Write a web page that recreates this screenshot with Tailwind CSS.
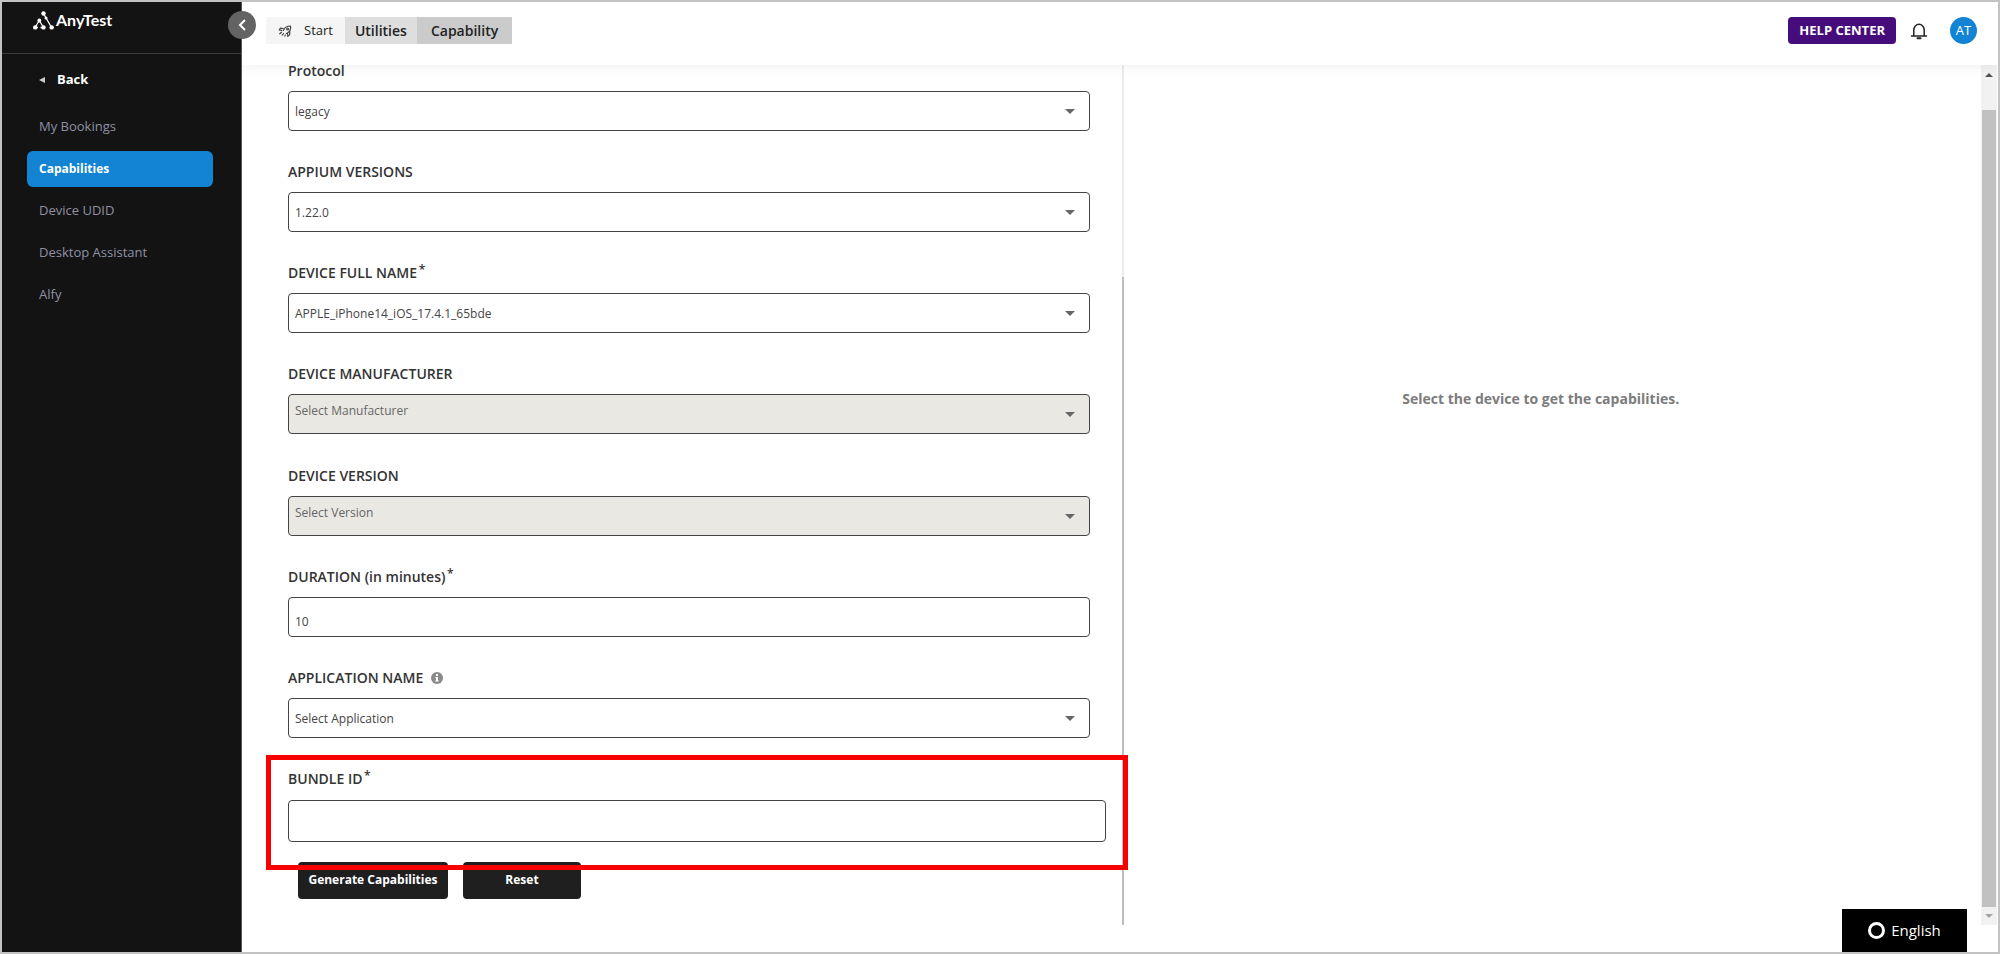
<!DOCTYPE html>
<html lang="en">
<head>
    <meta charset="UTF-8">
    <title>AnyTest - Capability</title>
    <script src="https://cdn.jsdelivr.net/npm/@tailwindcss/browser@4"></script>
</head>
<body class="font-['Open_Sans',sans-serif] text-[#333]">
<div class="relative flex h-screen border-2 border-[#c3c3c3] bg-white overflow-hidden">

    <!-- Sidebar -->
    <aside class="relative z-20 w-60 shrink-0 bg-[#131313] border-r border-[#555]">
        <div class="h-[52px] border-b border-[#3a3a3a] pl-[31px] pt-2">
            <a href="#" class="flex items-start gap-0.5 text-white font-['Lato',sans-serif] font-bold text-[16px] leading-5">
                <svg class="w-[21px] h-5" viewBox="0 0 21 20" fill="none" stroke="#fff" stroke-width="1.3">
                    <path d="M10.500 3.500L18.500 17.500M6.300 10.500L2 17.500H5M6.300 10.500l4.200 7h-3"/>
                    <g fill="#fff" stroke="none">
                        <circle cx="10.500" cy="3.500" r="2.200"/>
                        <circle cx="13" cy="8" r="1.500"/>
                        <circle cx="6.300" cy="10.500" r="1.900"/>
                        <circle cx="2.200" cy="17.400" r="2.200"/>
                        <circle cx="10.500" cy="17.400" r="2.200"/>
                        <circle cx="18.700" cy="17.400" r="2.200"/>
                    </g>
                </svg>
                AnyTest
            </a>
        </div>
        <button type="button" aria-label="Collapse menu" class="absolute top-[9px] -right-[15px] size-7 rounded-full bg-[#636363] flex items-center justify-center">
            <svg class="w-2 h-3" viewBox="0 0 8 12" fill="none" stroke="#fff" stroke-width="2"><path d="M7 1L2 6l5 5"/></svg>
        </button>
        <a href="#" class="flex items-center gap-3 mt-4 pl-[37px] h-5 text-white font-bold text-[13px]">
            <svg class="w-[6px] h-[6px]" viewBox="0 0 6 6" fill="#ccc"><path d="M6 0v6L0 3z"/></svg>
            Back
        </a>
        <nav class="mt-[19px] ml-[25px] mr-7 flex flex-col gap-1.5 text-[13px] font-medium text-[#8f91a3]">
            <a href="#" class="flex items-center h-9 pl-3">My Bookings</a>
            <a href="#" class="flex items-center h-9 pl-3 rounded-md bg-[#1284d3] text-white text-[12px] font-bold">Capabilities</a>
            <a href="#" class="flex items-center h-9 pl-3">Device UDID</a>
            <a href="#" class="flex items-center h-9 pl-3">Desktop Assistant</a>
            <a href="#" class="flex items-center h-9 pl-3">Alfy</a>
        </nav>
    </aside>

    <div class="flex-1 min-w-0 flex flex-col">
        <!-- Top bar -->
        <header class="relative z-10 h-[63px] shrink-0 bg-white shadow-[0_2px_12px_rgba(0,0,0,0.06)] pl-6 pr-[21px] pt-[15px] flex items-start justify-between">
            <nav class="flex h-[27px] text-[14px] text-[#222]">
                <a href="#" class="flex items-center gap-3 pl-3 pr-3 bg-[#f5f5f5] text-[13px]">
                    <svg class="w-3.5 h-3.5" viewBox="0 0 14 14" fill="none" stroke="#444" stroke-width="1.2" stroke-linecap="round" stroke-linejoin="round">
                        <path d="M5.500 6.500C6.500 3.500 9 2 12.500 2c.6 3.500-.8 6-4 7.500M5.200 4.500L2.500 4.200 1.200 6l2.600.4M9.500 9.200l.3 3.200 1.800-1.500.2-3.200M3.500 8.200L1.800 9.800M5.500 9.500l-1.200 1.700M7.300 10.800l-.4 1.400"/>
                        <circle cx="9.600" cy="4.900" r="0.900"/>
                    </svg>
                    Start
                </a>
                <a href="#" class="flex items-center px-2.5 bg-[#dedede] font-semibold">Utilities</a>
                <a href="#" class="flex items-center px-3.5 bg-[#cbcbcb] font-semibold">Capability</a>
            </nav>
            <div class="flex items-center h-[27px]">
                <a href="#" class="flex items-center h-[27px] px-[11px] rounded bg-[#470c7c] text-white text-[13px] font-bold">HELP CENTER</a>
                <button type="button" aria-label="Notifications" class="ml-3.5">
                    <svg class="w-[18px] h-[18px]" viewBox="0 0 18 18" fill="none" stroke="#222" stroke-width="1.5" stroke-linecap="round" stroke-linejoin="round">
                        <path d="M1.500 14h15M3.800 14V8a5.200 5.800 0 0 1 10.400 0v6"/>
                        <path d="M7.500 16.200h3" stroke-width="2"/>
                    </svg>
                </button>
                <button type="button" class="ml-[22px] size-[27px] rounded-full bg-[#1284d3] text-white text-[13px] font-medium">AT</button>
            </div>
        </header>

        <!-- Content -->
        <main class="flex-1 min-h-0 flex mb-[27px] mr-px">
            <div class="flex-1 grid grid-cols-[883fr_857fr]">
                <section class="relative flex flex-col border-r-2 border-[#ececec] pl-[46px] -mt-1">
                    <form class="flex-1 flex flex-col">
                        <div class="flex-1 flex flex-col justify-between text-[14px] leading-5 pr-4">
                            <div class="mr-4">
                                <label for="protocol" class="block font-semibold">Protocol</label>
                                <div class="relative mt-2.5">
                                    <select id="protocol" class="appearance-none block w-full h-10 px-1.5 pt-0.5 rounded border border-[#444] bg-white text-[12px] text-[#444]">
                                        <option>legacy</option>
                                    </select>
                                    <svg class="absolute right-[15px] top-[18px] w-2.5 h-[5px] pointer-events-none" viewBox="0 0 10 5" fill="#666"><path d="M0 0h10L5 5z"/></svg>
                                </div>
                            </div>
                            <div class="mr-4">
                                <label for="appium" class="block font-semibold">APPIUM VERSIONS</label>
                                <div class="relative mt-2.5">
                                    <select id="appium" class="appearance-none block w-full h-10 px-1.5 pt-0.5 rounded border border-[#444] bg-white text-[12px] text-[#444]">
                                        <option>1.22.0</option>
                                    </select>
                                    <svg class="absolute right-[15px] top-[18px] w-2.5 h-[5px] pointer-events-none" viewBox="0 0 10 5" fill="#666"><path d="M0 0h10L5 5z"/></svg>
                                </div>
                            </div>
                            <div class="mr-4">
                                <label for="device" class="block font-semibold">DEVICE FULL NAME <sup class="-ml-0.5 -top-1 text-[12px]">*</sup></label>
                                <div class="relative mt-2.5">
                                    <select id="device" class="appearance-none block w-full h-10 px-1.5 pt-0.5 rounded border border-[#444] bg-white text-[12px] text-[#444]">
                                        <option>APPLE_iPhone14_iOS_17.4.1_65bde</option>
                                    </select>
                                    <svg class="absolute right-[15px] top-[18px] w-2.5 h-[5px] pointer-events-none" viewBox="0 0 10 5" fill="#666"><path d="M0 0h10L5 5z"/></svg>
                                </div>
                            </div>
                            <div class="mr-4">
                                <label for="manufacturer" class="block font-semibold">DEVICE MANUFACTURER</label>
                                <div class="relative mt-2.5">
                                    <select id="manufacturer" disabled class="appearance-none block w-full h-10 px-1.5 pb-1.5 rounded border border-[#444] bg-[#e9e8e3] text-[12px] text-[#666] opacity-100">
                                        <option>Select Manufacturer</option>
                                    </select>
                                    <svg class="absolute right-[15px] top-[18px] w-2.5 h-[5px] pointer-events-none" viewBox="0 0 10 5" fill="#666"><path d="M0 0h10L5 5z"/></svg>
                                </div>
                            </div>
                            <div class="mr-4">
                                <label for="version" class="block font-semibold">DEVICE VERSION</label>
                                <div class="relative mt-2.5">
                                    <select id="version" disabled class="appearance-none block w-full h-10 px-1.5 pb-1.5 rounded border border-[#444] bg-[#e9e8e3] text-[12px] text-[#666] opacity-100">
                                        <option>Select Version</option>
                                    </select>
                                    <svg class="absolute right-[15px] top-[18px] w-2.5 h-[5px] pointer-events-none" viewBox="0 0 10 5" fill="#666"><path d="M0 0h10L5 5z"/></svg>
                                </div>
                            </div>
                            <div class="mr-4">
                                <label for="duration" class="block font-semibold">DURATION (in minutes) <sup class="-ml-0.5 -top-1 text-[12px]">*</sup></label>
                                <input id="duration" type="text" value="10" class="block w-full h-10 mt-2.5 px-1.5 pt-2.5 rounded border border-[#444] bg-white text-[12px] text-[#444]">
                            </div>
                            <div class="mr-4">
                                <div class="flex items-center gap-2">
                                    <label for="application" class="font-semibold">APPLICATION NAME</label>
                                    <svg class="w-3 h-3" viewBox="0 0 12 12">
                                        <circle cx="6" cy="6" r="6" fill="#8a8a8a"/>
                                        <path d="M5 2h2v2H5zM4.200 5H7v3.500h.8V9.600H4.200V8.500H5V6h-.8z" fill="#fff"/>
                                    </svg>
                                </div>
                                <div class="relative mt-2.5">
                                    <select id="application" class="appearance-none block w-full h-10 px-1.5 pt-0.5 rounded border border-[#444] bg-white text-[12px] text-[#444]">
                                        <option>Select Application</option>
                                    </select>
                                    <svg class="absolute right-[15px] top-[18px] w-2.5 h-[5px] pointer-events-none" viewBox="0 0 10 5" fill="#666"><path d="M0 0h10L5 5z"/></svg>
                                </div>
                            </div>
                            <div class="relative">
                                <label for="bundle" class="block font-semibold">BUNDLE ID <sup class="-ml-0.5 -top-1 text-[12px]">*</sup></label>
                                <input id="bundle" type="text" class="block w-full h-[42px] mt-[11px] px-1.5 rounded border border-[#444] bg-white text-[12px] text-[#444]">
                                <!-- Highlight around the bundle field -->
                                <div class="absolute z-10 -top-3.5 -bottom-7 -left-[22px] -right-[22px] border-5 border-[#f80000] pointer-events-none"></div>
                            </div>
                        </div>
                        <div class="flex gap-[15px] mt-5 mb-[26px] pl-2.5 text-[12px] font-bold text-white">
                            <button type="submit" class="h-[37px] w-[150px] pb-0.5 rounded bg-[#1f1f1f]">Generate Capabilities</button>
                            <button type="reset" class="h-[37px] w-[118px] pb-0.5 rounded bg-[#1f1f1f]">Reset</button>
                        </div>
                    </form>
                    <!-- Column scroll thumb -->
                    <div class="absolute -right-0.5 bottom-0 w-0.5 h-3/4 bg-[#bdbdbd]"></div>
                </section>
                <section class="pr-6 pt-[324px] text-center text-[14px] leading-5 font-bold text-[#7c7c7c]">
                    Select the device to get the capabilities.
                </section>
            </div>

            <!-- Page scrollbar -->
            <div class="w-4 bg-[#f1f1f1] flex flex-col items-center">
                <svg class="mt-2 w-2 h-1 shrink-0" viewBox="0 0 8 4" fill="#505050"><path d="M0 4L4 0l4 4z"/></svg>
                <div class="mt-[33px] w-3.5 flex-1 bg-[#c1c1c1]"></div>
                <svg class="my-[7px] w-2 h-1 shrink-0" viewBox="0 0 8 4" fill="#a3a3a3"><path d="M0 0h8L4 4z"/></svg>
            </div>
        </main>
    </div>

    <!-- Language switch -->
    <button type="button" class="absolute z-20 bottom-0 right-[31px] w-[125px] h-[43px] bg-black text-white text-[15px] flex items-center justify-center gap-1.5">
        <span class="size-[17px] rounded-full border-3 border-white"></span>
        English
    </button>
</div>
</body>
</html>
